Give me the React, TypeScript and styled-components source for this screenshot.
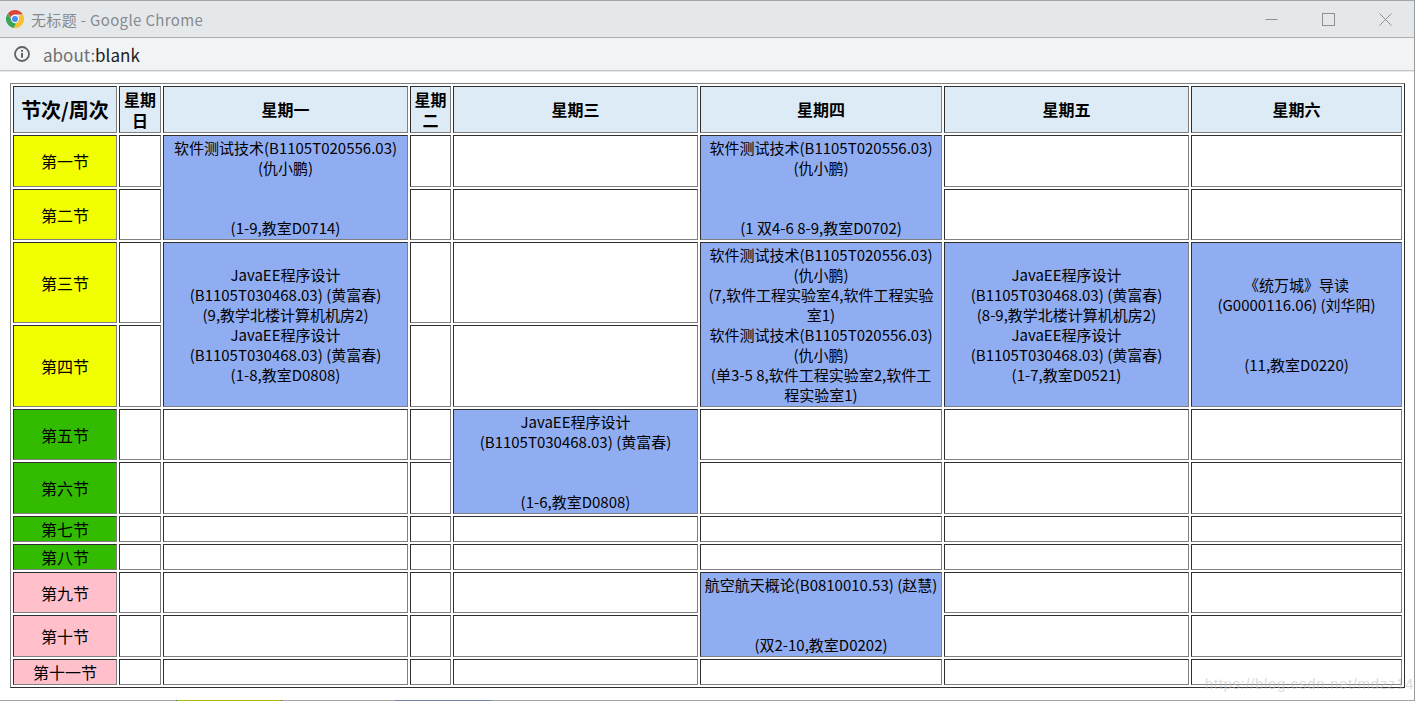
import styled, { createGlobalStyle } from "styled-components";

const GlobalStyle = createGlobalStyle`
    html, body {
        margin: 0;
        padding: 0;
        background: #fff;
    }
    body {
        font-family: "Noto Sans CJK SC", "Noto Sans", sans-serif;
    }
`;

const Window = styled.div`
    position: relative;
    width: 1415px;
    height: 701px;
    box-sizing: border-box;
    border-right: 1px solid #9a9a9a;
    display: flex;
    flex-direction: column;
    overflow: hidden;
    background: #fff;
`;

const TitleBar = styled.div`
    height: 38px;
    box-sizing: border-box;
    flex: none;
    background: #e4e8eb;
    border-top: 1px solid #a3a5a7;
    border-bottom: 1px solid #aeb0b2;
    display: flex;
    align-items: center;
    padding: 0 22px 0 5px;
    gap: 6px;
`;

const WindowTitle = styled.span`
    font-size: 15px;
    letter-spacing: 0.35px;
    color: #878a8c;
    flex: 1;
`;

const WindowControls = styled.div`
    display: flex;
    align-items: center;
    gap: 44px;
`;

const AddressBar = styled.div`
    height: 33px;
    box-sizing: border-box;
    flex: none;
    background: #f1f3f4;
    border-bottom: 1px solid #c4c6c8;
    display: flex;
    align-items: center;
    padding: 0 0 0 14px;
    gap: 13px;
    font-size: 17px;
    color: #6d7072;
`;

const Host = styled.span`
    color: #202124;
`;

const Page = styled.div`
    flex: 1;
    padding: 11px 0 0 10px;
    border-top: 1px solid #e8e8e8;
`;

const Timetable = styled.table`
    width: 1395px;
    table-layout: fixed;
    border-collapse: separate;
    border-spacing: 2px;
    border: 1px solid;
    border-color: #808080 #2e2e2e #2e2e2e #808080;
    font-size: 15px;
    line-height: 20px;
    color: #000;
    text-align: center;
`;

const Column = styled.col<{ $w: number }>`
    width: ${(p) => p.$w}px;
`;

const Row = styled.tr<{ $h: number }>`
    height: ${(p) => p.$h}px;
`;

const cellEdges = `
    box-sizing: border-box;
    border: 1px solid;
    border-color: #2e2e2e #808080 #808080 #2e2e2e;
    padding: 1px;
    vertical-align: middle;
    text-align: center;
`;

const HeadCell = styled.th<{ $big?: boolean }>`
    ${cellEdges}
    background: #ddebf7;
    font-size: ${(p) => (p.$big ? 20 : 16)}px;
    line-height: ${(p) => (p.$big ? 26 : 21)}px;
    font-weight: 700;
`;

const SlotCell = styled.td<{ $tone: string }>`
    ${cellEdges}
    background: ${(p) => p.$tone};
    font-size: 16px;
`;

const EmptyCell = styled.td`
    ${cellEdges}
    background: #fff;
`;

const CourseCell = styled.td`
    ${cellEdges}
    background: #91adf2;
`;

const Line = styled.div`
    min-height: 20px;
`;

const Watermark = styled.span`
    position: absolute;
    right: 0;
    bottom: 9px;
    font-family: "Liberation Sans", sans-serif;
    font-size: 15px;
    letter-spacing: 0.65px;
    color: rgba(190, 190, 190, 0.55);
`;

const Taskbar = styled.div`
    position: absolute;
    left: 0;
    right: 0;
    bottom: 0;
    height: 1px;
    background: #a6a6a6;
    display: flex;
    align-items: stretch;
`;

const Sliver = styled.div<{ $w: number; $tone?: string }>`
    width: ${(p) => p.$w}px;
    background: ${(p) => p.$tone || "transparent"};
`;

const ChromeLogo = () => (
    <svg width="20" height="20" viewBox="0 0 20 20">
        <path d="M10 1a9 9 0 0 1 7.8 4.5H10a4.5 4.5 0 0 0-4.3 3.1L2.9 4.4A9 9 0 0 1 10 1z" fill="#dc4437" />
        <path d="M2.9 4.4l3.9 6.9a4.5 4.5 0 0 0 4.6 3.2L8.7 18.9A9 9 0 0 1 2.9 4.4z" fill="#3ba457" />
        <path d="M17.8 5.5A9 9 0 0 1 8.7 18.9l3.9-6.8A4.5 4.5 0 0 0 13.6 7z" fill="#f6c22f" />
        <circle cx="10" cy="10" r="3.6" fill="#4a8af4" stroke="#fff" strokeWidth="1" />
    </svg>
);

const InfoIcon = () => (
    <svg width="16" height="16" viewBox="0 0 16 16" fill="none" stroke="#5f6368">
        <circle cx="8" cy="8" r="7" strokeWidth="1.8" />
        <path d="M8 7v4.8" strokeWidth="2" />
        <path d="M8 4v1.8" strokeWidth="2" />
    </svg>
);

const MinimizeIcon = () => (
    <svg width="13" height="13" viewBox="0 0 13 13" stroke="#8e9192">
        <path d="M0.5 6.5h12" />
    </svg>
);

const MaximizeIcon = () => (
    <svg width="13" height="13" viewBox="0 0 13 13" fill="none" stroke="#8e9192">
        <rect x="0.5" y="0.5" width="12" height="12" />
    </svg>
);

const CloseIcon = () => (
    <svg width="13" height="13" viewBox="0 0 13 13" stroke="#8e9192">
        <path d="M0.5 0.5l12 12M12.5 0.5l-12 12" />
    </svg>
);

const YELLOW = "#f2ff00";
const GREEN = "#33bb00";
const PINK = "#ffc0cb";

const widths = [104, 42, 245, 41, 245, 242, 245, 211];
const days = ["星期日", "星期一", "星期二", "星期三", "星期四", "星期五", "星期六"];

const slots = [
    { name: "第一节", tone: YELLOW, h: 52 },
    { name: "第二节", tone: YELLOW, h: 51 },
    { name: "第三节", tone: YELLOW, h: 81 },
    { name: "第四节", tone: YELLOW, h: 82 },
    { name: "第五节", tone: GREEN, h: 51 },
    { name: "第六节", tone: GREEN, h: 52 },
    { name: "第七节", tone: GREEN, h: 26 },
    { name: "第八节", tone: GREEN, h: 26 },
    { name: "第九节", tone: PINK, h: 41 },
    { name: "第十节", tone: PINK, h: 42 },
    { name: "第十一节", tone: PINK, h: 26 },
];

const TEST = "软件测试技术(B1105T020556.03) (仇小鹏)";
const JAVA = "JavaEE程序设计 (B1105T030468.03) (黄富春)";

// key: slot index - day index, every course spans two slots
const courses: Record<string, string[]> = {
    "0-1": [TEST, "", "", "(1-9,教室D0714)"],
    "2-1": [JAVA, "(9,教学北楼计算机机房2)", JAVA, "(1-8,教室D0808)"],
    "4-3": [JAVA, "", "", "(1-6,教室D0808)"],
    "0-4": [TEST, "", "", "(1 双4-6 8-9,教室D0702)"],
    "2-4": [TEST, "(7,软件工程实验室4,软件工程实验室1)", TEST, "(单3-5 8,软件工程实验室2,软件工", "程实验室1)"],
    "8-4": ["航空航天概论(B0810010.53) (赵慧)", "", "", "(双2-10,教室D0202)"],
    "2-5": [JAVA, "(8-9,教学北楼计算机机房2)", JAVA, "(1-7,教室D0521)"],
    "2-6": ["《统万城》导读", "(G0000116.06) (刘华阳)", "", "", "(11,教室D0220)"],
};

const App = () => {
    const dayCell = (slot: number, day: number) => {
        const course = courses[`${slot}-${day}`];
        if (course) {
            return (
                <CourseCell key={day} rowSpan={2}>
                    {course.map((text, i) => (
                        <Line key={i}>{text}</Line>
                    ))}
                </CourseCell>
            );
        }
        // second slot of a course is already covered by the rowSpan
        if (courses[`${slot - 1}-${day}`]) return null;
        return <EmptyCell key={day} />;
    };

    return (
        <Window>
            <GlobalStyle />
            <TitleBar>
                <ChromeLogo />
                <WindowTitle>无标题 - Google Chrome</WindowTitle>
                <WindowControls>
                    <MinimizeIcon />
                    <MaximizeIcon />
                    <CloseIcon />
                </WindowControls>
            </TitleBar>
            <AddressBar>
                <InfoIcon />
                <span>
                    about:<Host>blank</Host>
                </span>
            </AddressBar>
            <Page>
                <Timetable>
                    <colgroup>
                        {widths.map((w, i) => (
                            <Column key={i} $w={w} />
                        ))}
                    </colgroup>
                    <tbody>
                        <Row $h={47}>
                            <HeadCell $big>节次/周次</HeadCell>
                            {days.map((day) => (
                                <HeadCell key={day}>{day}</HeadCell>
                            ))}
                        </Row>
                        {slots.map((slot, s) => (
                            <Row key={slot.name} $h={slot.h}>
                                <SlotCell $tone={slot.tone}>{slot.name}</SlotCell>
                                {days.map((_, d) => dayCell(s, d))}
                            </Row>
                        ))}
                    </tbody>
                </Timetable>
            </Page>
            <Watermark>https://blog.csdn.net/mdzz14</Watermark>
            <Taskbar>
                <Sliver $w={176} />
                <Sliver $w={1} $tone="#2f6f8f" />
                <Sliver $w={104} $tone="#b4bb10" />
                <Sliver $w={1} $tone="#2f6f8f" />
                <Sliver $w={113} />
                <Sliver $w={97} $tone="#7186ad" />
            </Taskbar>
        </Window>
    );
};

export default App;
